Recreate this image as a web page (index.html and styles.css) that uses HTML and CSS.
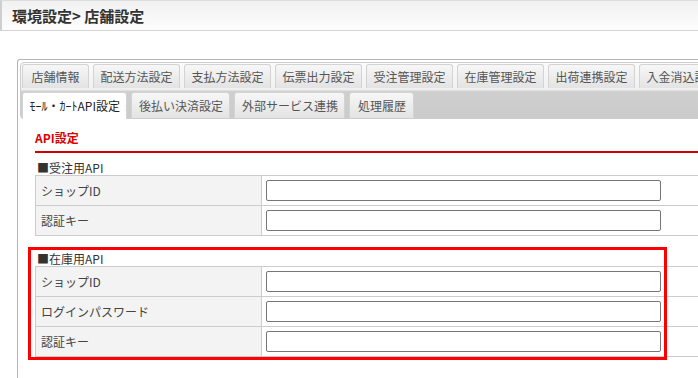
FILE: index.html
```html
<!DOCTYPE html>
<html lang="ja">
<head>
  <meta charset="UTF-8" />
  <title>店舗設定</title>
  <link rel="stylesheet" href="styles.css">
</head>
<body>
  <!-- タイトル -->
  <div class="header">
    <h1>環境設定&gt; 店舗設定</h1>
  </div>

  <div class="panel">
    <!-- タブ -->
    <div class="tabs">
      <ul class="tab-row">
        <li class="tab">店舗情報</li>
        <li class="tab">配送方法設定</li>
        <li class="tab">支払方法設定</li>
        <li class="tab">伝票出力設定</li>
        <li class="tab">受注管理設定</li>
        <li class="tab">在庫管理設定</li>
        <li class="tab">出荷連携設定</li>
        <li class="tab">入金消込設定</li>
      </ul>
      <ul class="tab-row">
        <li class="tab activo">ﾓｰﾙ・ｶｰﾄAPI設定</li>
        <li class="tab">後払い決済設定</li>
        <li class="tab">外部サービス連携</li>
        <li class="tab">処理履歴</li>
      </ul>
    </div>

    <div class="contenido">
      <h2 class="titulo">API設定</h2>

      <div class="grupo">
        <p class="grupo-titulo">■受注用API</p>
        <table class="tabla">
          <tr><th>ショップID</th><td><input type="text" /></td></tr>
          <tr><th>認証キー</th><td><input type="text" /></td></tr>
        </table>
      </div>

      <div class="grupo grupo-stock">
        <p class="grupo-titulo">■在庫用API</p>
        <table class="tabla">
          <tr><th>ショップID</th><td><input type="text" /></td></tr>
          <tr><th>ログインパスワード</th><td><input type="text" /></td></tr>
          <tr><th>認証キー</th><td><input type="text" /></td></tr>
        </table>
        <div class="marca"></div>
      </div>
    </div>
  </div>
</body>
</html>
```

FILE: styles.css
```css
html, body {
  overflow: hidden;
}

body {
  margin: 0;
  font-family: "Noto Sans CJK JP", "Noto Sans", sans-serif;
  font-size: 12px;
  color: #333;
  background: #fff;
}

.header {
  height: 31px;
  border-top: 1px solid #dcdcdc;
  border-left: 2px solid #cfcfcf;
  border-bottom: 1px solid #d4d4d4;
  background: linear-gradient(to bottom, #f1f1f1, #fdfdfd);
  box-sizing: border-box;
}

.header h1 {
  margin: 0;
  padding-left: 10px;
  font-size: 15px;
  line-height: 29px;
  color: #333;
}

.panel {
  margin: 28px 0 0 17px;
  width: 760px;
  height: 400px;
  border-top: 1px solid #b5b5b5;
  border-left: 1px solid #b5b5b5;
  border-top-left-radius: 3px;
  padding: 2px 0 0 2px;
}

.tabs {
  height: 54px;
  padding: 1px 0 0 1px;
  border: 1px solid #cdcdcd;
  border-radius: 4px;
  background: linear-gradient(to bottom, #fbfbfb 0%, #f0f0f0 48%, #cfcfcf 52%, #cbcbcb 100%);
}

.tab-row {
  display: flex;
  gap: 4px;
  list-style: none;
  margin: 0;
  padding: 0;
  white-space: nowrap;
}

.tab-row + .tab-row {
  margin-top: 4px;
}

.tab {
  min-width: 67px;
  height: 24px;
  line-height: 23px;
  padding: 0 6.5px;
  border: 1px solid #d3d3d3;
  border-bottom: none;
  border-radius: 3px 3px 0 0;
  background: linear-gradient(to bottom, #f7f7f7, #e3e3e3);
  color: #555;
  text-align: center;
  box-sizing: border-box;
}

.tab-row + .tab-row .tab {
  min-width: 65px;
  height: 26px;
  line-height: 25px;
}

.tab-row + .tab-row .tab.activo {
  height: 27px;
  background: #fff;
  color: #222;
  position: relative;
  z-index: 1;
}

.contenido {
  padding: 12px 0 0 15px;
}

.titulo {
  margin: 0;
  font-size: 12px;
  line-height: 14px;
  color: #d00;
  padding-bottom: 6px;
  border-bottom: 2px solid #c00;
}

.grupo {
  margin-top: 8px;
}

.grupo-titulo {
  margin: 0 0 0 2px;
  line-height: 14px;
}

.tabla {
  border-collapse: collapse;
  width: 700px;
}

.tabla th,
.tabla td {
  border: 1px solid #ccc;
  height: 30px;
  padding: 0 4px;
  box-sizing: border-box;
}

.tabla th {
  width: 226px;
  background: #f2f3f2;
  font-weight: normal;
  text-align: left;
  padding-left: 5px;
  color: #444;
}

.tabla input {
  display: block;
  width: 395px;
  height: 21px;
  box-sizing: border-box;
  border: 1px solid #767676;
  border-radius: 2px;
  margin: 0;
}

.grupo-stock {
  margin-top: 16px;
  position: relative;
}

.marca {
  position: absolute;
  left: -7px;
  top: -5px;
  width: 639px;
  height: 113px;
  border: 3px solid #f00;
  box-sizing: border-box;
  pointer-events: none;
}
```
